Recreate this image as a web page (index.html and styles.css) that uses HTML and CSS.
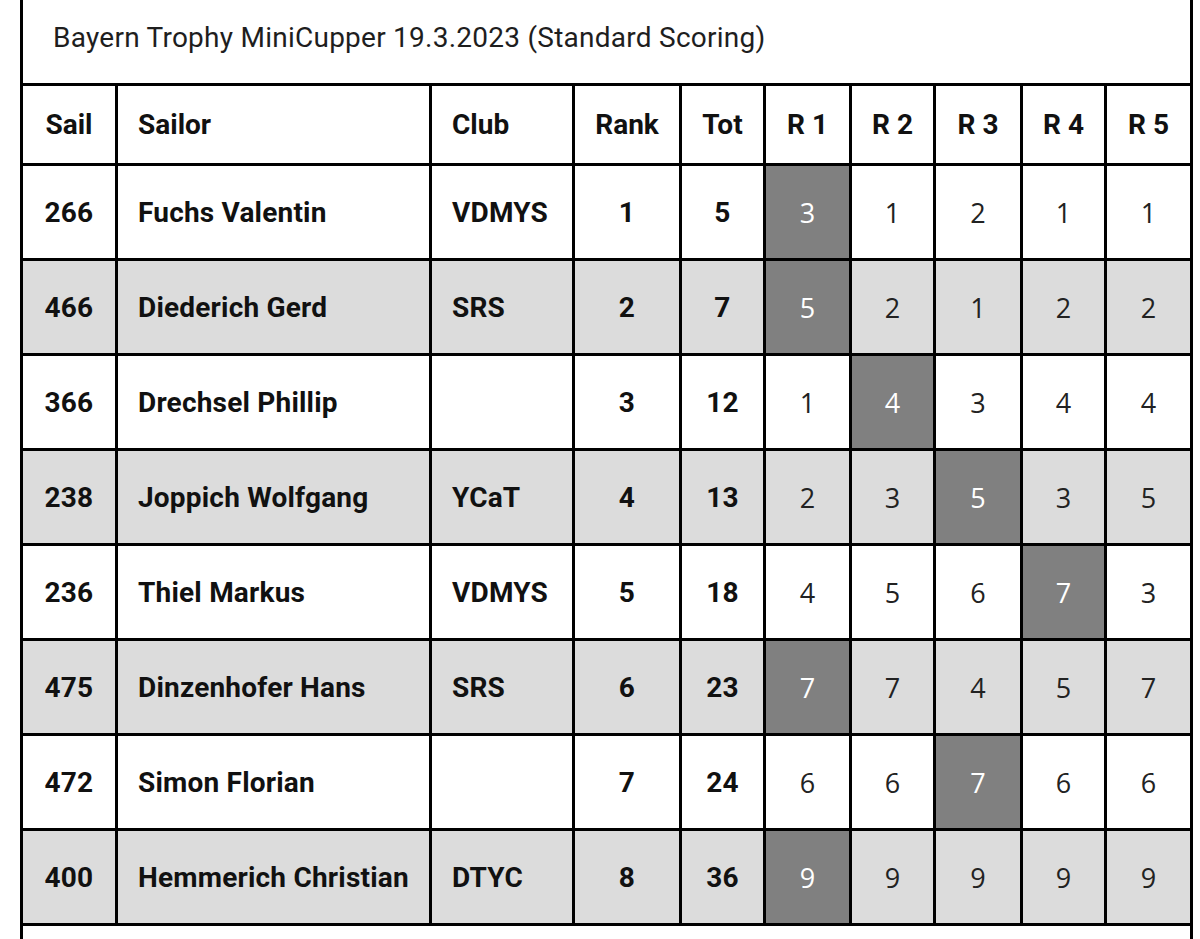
FILE: index.html
```html
<!DOCTYPE html>
<html lang="de">
<head>
<meta charset="utf-8">
<title>Bayern Trophy MiniCupper</title>
<link rel="stylesheet" href="styles.css">
</head>
<body>
<div class="page">
  <div class="title">Bayern Trophy MiniCupper 19.3.2023 (Standard Scoring)</div>
  <table class="results">
    <colgroup>
      <col class="c-sail"><col class="c-sailor"><col class="c-club"><col class="c-rank"><col class="c-tot">
      <col class="c-r1"><col class="c-r2"><col class="c-r3"><col class="c-r4"><col class="c-r5">
    </colgroup>
    <thead>
      <tr>
        <th class="ctr">Sail</th><th class="left">Sailor</th><th class="left">Club</th><th class="ctr">Rank</th><th class="ctr">Tot</th>
        <th class="ctr">R 1</th><th class="ctr">R 2</th><th class="ctr">R 3</th><th class="ctr">R 4</th><th class="ctr">R 5</th>
      </tr>
    </thead>
    <tbody>
      <tr>
        <td class="b ctr">266</td><td class="b left">Fuchs Valentin</td><td class="b left">VDMYS</td><td class="b ctr">1</td><td class="b ctr">5</td>
        <td class="r drop">3</td><td class="r">1</td><td class="r">2</td><td class="r">1</td><td class="r">1</td>
      </tr>
      <tr class="alt">
        <td class="b ctr">466</td><td class="b left">Diederich Gerd</td><td class="b left">SRS</td><td class="b ctr">2</td><td class="b ctr">7</td>
        <td class="r drop">5</td><td class="r">2</td><td class="r">1</td><td class="r">2</td><td class="r">2</td>
      </tr>
      <tr>
        <td class="b ctr">366</td><td class="b left">Drechsel Phillip</td><td class="b left"></td><td class="b ctr">3</td><td class="b ctr">12</td>
        <td class="r">1</td><td class="r drop">4</td><td class="r">3</td><td class="r">4</td><td class="r">4</td>
      </tr>
      <tr class="alt">
        <td class="b ctr">238</td><td class="b left">Joppich Wolfgang</td><td class="b left">YCaT</td><td class="b ctr">4</td><td class="b ctr">13</td>
        <td class="r">2</td><td class="r">3</td><td class="r drop">5</td><td class="r">3</td><td class="r">5</td>
      </tr>
      <tr>
        <td class="b ctr">236</td><td class="b left">Thiel Markus</td><td class="b left">VDMYS</td><td class="b ctr">5</td><td class="b ctr">18</td>
        <td class="r">4</td><td class="r">5</td><td class="r">6</td><td class="r drop">7</td><td class="r">3</td>
      </tr>
      <tr class="alt">
        <td class="b ctr">475</td><td class="b left">Dinzenhofer Hans</td><td class="b left">SRS</td><td class="b ctr">6</td><td class="b ctr">23</td>
        <td class="r drop">7</td><td class="r">7</td><td class="r">4</td><td class="r">5</td><td class="r">7</td>
      </tr>
      <tr>
        <td class="b ctr">472</td><td class="b left">Simon Florian</td><td class="b left"></td><td class="b ctr">7</td><td class="b ctr">24</td>
        <td class="r">6</td><td class="r">6</td><td class="r drop">7</td><td class="r">6</td><td class="r">6</td>
      </tr>
      <tr class="alt">
        <td class="b ctr">400</td><td class="b left">Hemmerich Christian</td><td class="b left">DTYC</td><td class="b ctr">8</td><td class="b ctr">36</td>
        <td class="r drop">9</td><td class="r">9</td><td class="r">9</td><td class="r">9</td><td class="r">9</td>
      </tr>
    </tbody>
  </table>
  <div class="footer-box"></div>
</div>
</body>
</html>
```

FILE: styles.css
```css
html, body {
  margin: 0;
  padding: 0;
  background: #ffffff;
}

body {
  font-family: Roboto, "Liberation Sans", sans-serif;
  color: #111111;
  overflow: hidden;
}

.page {
  width: 1173px;
  margin-left: 20px;
}

.title {
  box-sizing: border-box;
  height: 83px;
  border-left: 3px solid #000;
  border-right: 3px solid #000;
  padding: 23px 0 0 30px;
  font-size: 28px;
  letter-spacing: 0.25px;
  line-height: 30px;
  color: #1e1e1e;
}

.results {
  width: 1173px;
  table-layout: fixed;
  border-collapse: separate;
  border-spacing: 0;
  border-left: 3px solid #000;
  border-top: 3px solid #000;
}

.c-sail { width: 95px; }
.c-sailor { width: 314px; }
.c-club { width: 143px; }
.c-rank { width: 107px; }
.c-tot { width: 84px; }
.c-r1 { width: 86px; }
.c-r2 { width: 84px; }
.c-r3 { width: 87px; }
.c-r4 { width: 84px; }
.c-r5 { width: 86px; }

.results th,
.results td {
  box-sizing: border-box;
  border-right: 3px solid #000;
  border-bottom: 3px solid #000;
  padding: 0;
  white-space: nowrap;
  overflow: hidden;
}

.results th {
  height: 80px;
  font-size: 28px;
  font-weight: 700;
  color: #111;
}

.results td {
  height: 95px;
}

.left {
  text-align: left;
  padding-left: 20px !important;
}

.ctr {
  text-align: center;
}

.b {
  font-size: 28px;
  font-weight: 700;
  letter-spacing: 0.2px;
  color: #111;
}

.r {
  text-align: center;
  font-family: "Open Sans", "Noto Sans", sans-serif;
  font-size: 27px;
  font-weight: 400;
  color: #222;
}

.alt td {
  background: #dcdcdc;
}

.results td.drop {
  background: #808080;
  color: #ffffff;
}

.footer-box {
  height: 40px;
  border-left: 3px solid #000;
  border-right: 3px solid #000;
}
```
